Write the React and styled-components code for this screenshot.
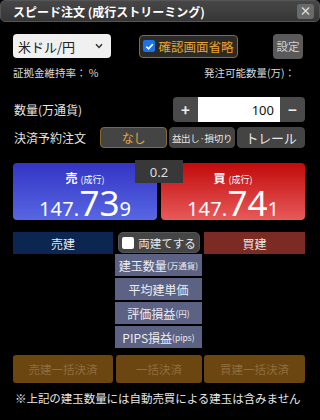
import React from 'react';
import styled, { createGlobalStyle } from 'styled-components';

const font = `"Noto Sans CJK JP", "Noto Sans", sans-serif`;

const Global = createGlobalStyle`
  html, body {
    margin: 0;
    padding: 0;
    background: #000;
  }
  body {
    font-family: ${font};
    color: #e6e6e6;
  }
`;

const Window = styled.div`
  width: 320px;
  height: 420px;
  background: #000;
  overflow: hidden;
`;

const Header = styled.div`
  height: 22px;
  box-sizing: border-box;
  display: flex;
  align-items: center;
  justify-content: space-between;
  padding: 0 5px 0 12px;
  background: linear-gradient(#474747, #363636);
  border: 1px solid #555;
  border-radius: 5px;
`;

const Title = styled.span`
  font-size: 12px;
  font-weight: 700;
  color: #fff;
`;

const Close = styled.div`
  width: 17px;
  height: 15px;
  border-radius: 3px;
  background: #6a6a6a;
  color: #ddd;
  font-size: 12px;
  font-weight: 700;
  display: flex;
  align-items: center;
  justify-content: center;
  line-height: 1;
`;

const Body = styled.div`
  padding: 0 15px 0 13px;
`;

const TopRow = styled.div`
  display: flex;
  align-items: center;
  margin-top: 12px;
  height: 24px;
`;

const Select = styled.div`
  width: 98px;
  height: 24px;
  box-sizing: border-box;
  background: #f0f0f0;
  border-radius: 4px;
  display: flex;
  align-items: center;
  justify-content: space-between;
  padding: 0 8px 0 5px;
  color: #222;
  font-size: 13px;
`;

const ConfirmButton = styled.div`
  margin-left: 28px;
  width: 99px;
  height: 23px;
  box-sizing: border-box;
  border: 1px solid #8c6b2c;
  border-radius: 4px;
  background: #2b2a26;
  display: flex;
  align-items: center;
  justify-content: center;
  gap: 3px;
  color: #e9a231;
  font-size: 12.5px;
`;

const CheckBox = styled.span`
  width: 12px;
  height: 12px;
  border-radius: 2px;
  background: ${(p) => (p.$checked ? '#1a73e8' : '#fff')};
  display: inline-flex;
  align-items: center;
  justify-content: center;
  flex-shrink: 0;
`;

const SettingButton = styled.div`
  margin-left: auto;
  margin-right: 2px;
  width: 30px;
  height: 25px;
  border-radius: 4px;
  background: #5a5a5a;
  color: #cfcfcf;
  font-size: 11.5px;
  display: flex;
  align-items: center;
  justify-content: center;
`;

const InfoRow = styled.div`
  display: flex;
  justify-content: space-between;
  margin-top: 8px;
  padding-right: 10px;
  font-size: 10.5px;
  color: #d8d8d8;
  height: 14px;
  line-height: 14px;
`;

const FieldRow = styled.div`
  display: flex;
  align-items: center;
  justify-content: space-between;
  height: ${(p) => p.$h}px;
  margin-top: ${(p) => p.$mt}px;
`;

const Label = styled.span`
  font-size: 12px;
  color: #e4e4e4;
  padding-left: 1px;
`;

const Stepper = styled.div`
  display: flex;
  width: 132px;
  height: 25px;
  border-radius: 4px;
  background: #4a4a4a;
  overflow: hidden;
`;

const StepButton = styled.div`
  width: 25px;
  display: flex;
  align-items: center;
  justify-content: center;
  color: #eee;
  font-size: 15px;
  font-weight: 700;
`;

const Amount = styled.div`
  flex: 1;
  background: #fff;
  color: #111;
  font-family: "Noto Sans", sans-serif;
  font-size: 13px;
  display: flex;
  align-items: center;
  justify-content: flex-end;
  padding-right: 6px;
`;

const Options = styled.div`
  display: flex;
  gap: 2px;
`;

const Option = styled.div`
  width: ${(p) => p.$w}px;
  height: 21px;
  box-sizing: border-box;
  border-radius: 4px;
  border: 1px solid ${(p) => (p.$active ? '#8a6a2c' : '#444')};
  background: #444;
  color: ${(p) => (p.$active ? '#e2a83a' : '#e6e6e6')};
  font-size: ${(p) => p.$fs}px;
  display: flex;
  align-items: center;
  justify-content: center;
  white-space: nowrap;
  letter-spacing: -0.3px;
`;

const PriceArea = styled.div`
  position: relative;
  margin-top: 12px;
  padding-top: 3px;
  display: flex;
  gap: 4px;
`;

const PricePanel = styled.div`
  flex: 1;
  height: 57px;
  border-radius: 4px;
  background: ${(p) =>
    p.$side === 'sell'
      ? 'linear-gradient(#3434c4, #5767e4)'
      : 'linear-gradient(#c20a0a, #e85a5a)'};
  display: flex;
  flex-direction: column;
  align-items: center;
  color: #fff;
`;

const PriceHead = styled.div`
  margin-top: 8px;
  font-size: 12px;
  font-weight: 700;
  line-height: 13px;
  display: flex;
  align-items: baseline;
  gap: 3px;
`;

const Market = styled.span`
  font-size: 9px;
  font-weight: 400;
`;

const Price = styled.div`
  font-family: "Noto Sans", sans-serif;
  line-height: 30px;
  margin-top: 2px;
  letter-spacing: 0.2px;
  span {
    font-size: 20px;
  }
  b {
    font-size: 35px;
    font-weight: 400;
    letter-spacing: 0;
  }
`;

const Spread = styled.div`
  position: absolute;
  top: 0;
  left: 122px;
  width: 48px;
  height: 23px;
  background: #383838;
  color: #ddd;
  font-family: "Noto Sans", sans-serif;
  font-size: 13px;
  display: flex;
  align-items: center;
  justify-content: center;
`;

const Grid = styled.div`
  display: grid;
  grid-template-columns: 100px 87px 101px;
  column-gap: 2px;
  margin-top: ${(p) => p.$mt}px;
`;

const SideHead = styled.div`
  height: 22px;
  background: ${(p) => (p.$side === 'sell' ? '#0b2650' : '#7b2a24')};
  color: #e8e8e8;
  font-size: 12px;
  display: flex;
  align-items: center;
  justify-content: center;
`;

const HedgeButton = styled.div`
  margin: 0 2px 0 3px;
  height: 21px;
  border-radius: 5px;
  background: #454545;
  border: 1px solid #555;
  box-sizing: border-box;
  display: flex;
  align-items: center;
  justify-content: center;
  gap: 4px;
  font-size: 11.5px;
  color: #e6e6e6;
`;

const Column = styled.div`
  display: flex;
  flex-direction: column;
  gap: 2px;
`;

const Cell = styled.div`
  height: 22px;
  background: #5c6283;
  color: #ececf2;
  font-size: 12px;
  display: flex;
  align-items: center;
  justify-content: center;
  white-space: nowrap;
  small {
    font-size: 8.5px;
  }
`;

const BulkButton = styled.div`
  height: 28px;
  border-radius: 3px;
  background: #6b4611;
  color: #8f6d3f;
  font-size: 11.5px;
  display: flex;
  align-items: center;
  justify-content: center;
  margin-left: ${(p) => p.$ml || 0}px;
`;

const Note = styled.div`
  margin-top: 7px;
  padding-left: 2px;
  font-size: 11.5px;
  color: #e6e6e6;
  white-space: nowrap;
  letter-spacing: -0.05px;
`;

const Tick = () => (
  <svg width="9" height="9" viewBox="0 0 10 10">
    <path d="M1.5 5.2 L4 7.6 L8.6 2.4" fill="none" stroke="#fff" strokeWidth="1.8" />
  </svg>
);

const Chevron = () => (
  <svg width="8" height="6" viewBox="0 0 8 6">
    <path d="M1 1.2 L4 4.4 L7 1.2" fill="none" stroke="#333" strokeWidth="1.5" />
  </svg>
);

const App = () => (
  <Window>
    <Global />
    <Header>
      <Title>スピード注文 (成行ストリーミング)</Title>
      <Close>×</Close>
    </Header>
    <Body>
      <TopRow>
        <Select>
          米ドル/円
          <Chevron />
        </Select>
        <ConfirmButton>
          <CheckBox $checked>
            <Tick />
          </CheckBox>
          確認画面省略
        </ConfirmButton>
        <SettingButton>設定</SettingButton>
      </TopRow>
      <InfoRow>
        <span>証拠金維持率：&nbsp;%</span>
        <span>発注可能数量(万)：</span>
      </InfoRow>
      <FieldRow $h={25} $mt={17}>
        <Label>数量(万通貨)</Label>
        <Stepper>
          <StepButton>+</StepButton>
          <Amount>100</Amount>
          <StepButton>−</StepButton>
        </Stepper>
      </FieldRow>
      <FieldRow $h={21} $mt={5}>
        <Label>決済予約注文</Label>
        <Options>
          <Option $w={67} $fs={12} $active>なし</Option>
          <Option $w={66} $fs={9.5}>益出し·損切り</Option>
          <Option $w={68} $fs={13}>トレール</Option>
        </Options>
      </FieldRow>
      <PriceArea>
        <PricePanel $side="sell">
          <PriceHead>
            売<Market>(成行)</Market>
          </PriceHead>
          <Price>
            <span>147.</span>
            <b>73</b>
            <span>9</span>
          </Price>
        </PricePanel>
        <PricePanel $side="buy">
          <PriceHead>
            買<Market>(成行)</Market>
          </PriceHead>
          <Price>
            <span>147.</span>
            <b>74</b>
            <span>1</span>
          </Price>
        </PricePanel>
        <Spread>0.2</Spread>
      </PriceArea>
      <Grid $mt={12}>
        <SideHead $side="sell">売建</SideHead>
        <HedgeButton>
          <CheckBox />
          両建てする
        </HedgeButton>
        <SideHead $side="buy">買建</SideHead>
        <div />
        <Column>
          <Cell>
            建玉数量<small>(万通貨)</small>
          </Cell>
          <Cell>平均建単価</Cell>
          <Cell>
            評価損益<small>(円)</small>
          </Cell>
          <Cell>
            PIPS損益<small>(pips)</small>
          </Cell>
        </Column>
        <div />
      </Grid>
      <Grid $mt={7}>
        <BulkButton>売建一括決済</BulkButton>
        <BulkButton $ml={1}>一括決済</BulkButton>
        <BulkButton>買建一括決済</BulkButton>
      </Grid>
      <Note>※上記の建玉数量には自動売買による建玉は含みません</Note>
    </Body>
  </Window>
);

export default App;
